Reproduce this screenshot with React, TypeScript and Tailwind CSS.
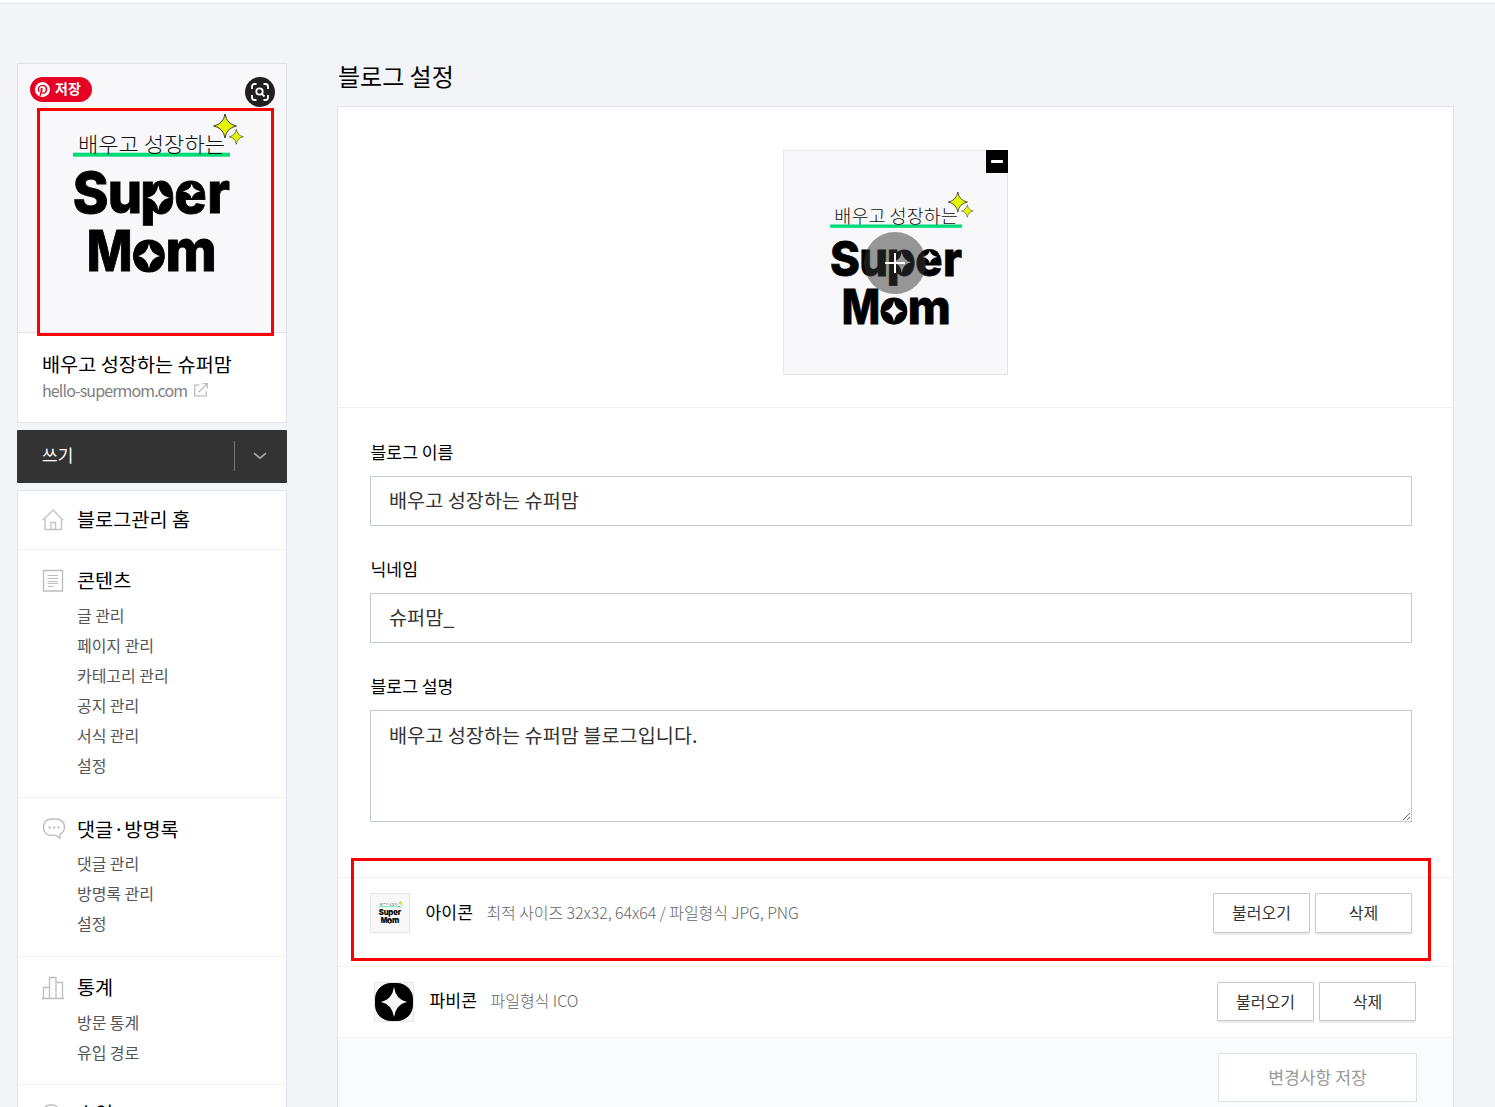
import React from "react";

type LogoProps = { className?: string };

const MENU = [
  {
    title: "콘텐츠",
    icon: <ContentIcon />,
    items: ["글 관리", "페이지 관리", "카테고리 관리", "공지 관리", "서식 관리", "설정"],
    pad: "pt-[15px] pb-[17px]",
    gap: "mt-[5px]",
  },
  {
    title: "댓글·방명록",
    icon: <CommentIcon />,
    items: ["댓글 관리", "방명록 관리", "설정"],
    pad: "pt-4 pb-[18px]",
    gap: "mt-1",
  },
  {
    title: "통계",
    icon: <StatsIcon />,
    items: ["방문 통계", "유입 경로"],
    pad: "pt-[15px] pb-[17px]",
    gap: "mt-[5px]",
  },
];

/* icons ------------------------------------------------------------------ */
function HomeIcon() {
  return (
    <svg width="24" height="24" viewBox="0 0 24 24" fill="none" stroke="#c4c4c4" strokeWidth="1.4">
      <path d="M.8 12.200 11 2l10.200 10.200M3 10.500v11h16.500v-11M9 21.500v-7h4.500v7" />
    </svg>
  );
}

function ContentIcon() {
  return (
    <svg width="24" height="24" viewBox="0 0 24 24" fill="none" stroke="#bdbdbd" strokeWidth="1.4">
      <path d="M1.500 1.500h19v20.500h-19z" />
      <path d="M5.500 6.500h10.500M5.500 9.500h10.500M5.500 12.500h10.500M5.500 14.500h10.500M5.500 17.500h6" strokeWidth="1" />
    </svg>
  );
}

function CommentIcon() {
  return (
    <svg width="24" height="24" viewBox="0 1 24 24" fill="none" stroke="#bdbdbd" strokeWidth="1.4">
      <path d="M9 2h5.500c4.500 0 8 3.300 8 8 0 3.500-1.800 5.700-4.500 7.300v3.700l-4.200-2.600H9C4.500 18.400 1.500 15 1.500 10.200S4.500 2 9 2z" />
      <path d="M6.500 10.500h2.200M11 10.500h2.200M15.500 10.500h2.200" strokeWidth="1.800" />
    </svg>
  );
}

function StatsIcon() {
  return (
    <svg width="24" height="24" viewBox="0 0 24 24" fill="none" stroke="#bdbdbd" strokeWidth="1.3">
      <path d="M0 22.500h22M1.500 22.500V11.500h6M7.500 22.500V1.500h6.500v21M14 6.500h6.500v16" />
    </svg>
  );
}

function RevenueIcon() {
  return (
    <svg width="24" height="24" viewBox="0 0 24 24" fill="none" stroke="#bdbdbd" strokeWidth="1.4">
      <rect x="0.700" y="3" width="17" height="17" rx="7.500" />
    </svg>
  );
}

function ExternalIcon() {
  return (
    <svg width="16" height="16" viewBox="0 0 16 16" fill="none" stroke="#bdbdbd" strokeWidth="1.3">
      <path d="M6.500 3.200H1.700v10.600h11.600V9.500M5.500 10.200l8.500-8.300M9.500 1.700h4.800v4.800" />
    </svg>
  );
}

function Star({ x, y, rx, ry, fill = "#f8f8fb", stroke }: { x: number; y: number; rx: number; ry: number; fill?: string; stroke?: string }) {
  return (
    <path
      transform={`translate(${x} ${y}) scale(${rx} ${ry})`}
      d="M0-1Q.14-.16 1 0 .14.16 0 1-.14.16-1 0-.14-.16 0-1z"
      fill={fill}
      stroke={stroke}
      strokeWidth={stroke ? 0.08 : 0}
    />
  );
}

function Logo({ className }: LogoProps) {
  return (
    <svg viewBox="0 0 268 268" className={className}>
      <rect x="55" y="88.700" width="157" height="4" fill="#00dc78" />
      <text x="60" y="87.500" fontSize="21" fontWeight="300" textLength="147" lengthAdjust="spacingAndGlyphs" fontFamily="'Noto Sans CJK KR', sans-serif" fill="#111">
        배우고 성장하는
      </text>
      <Star x={207} y={62} rx={11.5} ry={12} fill="#e4f500" stroke="#333" />
      <Star x={218.3} y={72.7} rx={7} ry={7.5} fill="#e4f500" stroke="#333" />
      <g fontFamily="Inter, sans-serif" fontWeight="800" fontSize="57" fill="#000" stroke="#000" strokeWidth="0.9">
        <text transform="scale(.95 1)" x="57.7 94.4 128.8 164.6 199.3" y="149.500">
          Super
        </text>
        <text transform="scale(.85 1)" x="80.900" y="207.500">
          M
        </text>
        <text transform="scale(.97 1)" x="117.2 152" y="207.500">
          om
        </text>
      </g>
      {/* filled counters */}
      <ellipse cx="141" cy="134" rx="12.500" ry="14.500" />
      <ellipse cx="173.500" cy="127" rx="12" ry="9" />
      <circle cx="131" cy="192" r="15.800" />
      <Star x={140.3} y={133.7} rx={11} ry={12.5} />
      <Star x={173.7} y={127.3} rx={9} ry={7.5} />
      <Star x={131} y={192} rx={11} ry={12.5} />
    </svg>
  );
}

/* sidebar ---------------------------------------------------------------- */
function ProfileCard() {
  return (
    <div className="h-[360px] border border-[#dfe3ec] bg-white">
      <div className="relative h-[269px] border-b border-[#dfe3ec] bg-[#f8f8fb]">
        <Logo className="h-[268px] w-[268px]" />
        <div className="absolute left-3 top-[13px] flex h-[25px] w-[62px] items-center rounded-full bg-[#e60023] pl-[5px] text-[14px] font-bold text-white">
          <svg width="15" height="15" viewBox="0 0 24 24" className="mr-[5px]">
            <path
              fill="#fff"
              d="M12 0a12 12 0 0 0-4.400 23.200c-.1-.95-.2-2.400.04-3.440l1.400-5.960s-.36-.72-.36-1.780c0-1.670.97-2.920 2.170-2.920 1.030 0 1.520.77 1.520 1.690 0 1.030-.65 2.570-1 4-.28 1.200.6 2.170 1.780 2.170 2.140 0 3.780-2.250 3.780-5.500 0-2.870-2.060-4.880-5.010-4.880-3.410 0-5.410 2.560-5.410 5.200 0 1.030.4 2.140.89 2.740.1.120.11.220.08.340l-.33 1.360c-.05.220-.17.270-.4.160-1.500-.7-2.440-2.890-2.440-4.650 0-3.780 2.750-7.260 7.930-7.260 4.160 0 7.400 2.970 7.400 6.930 0 4.140-2.610 7.460-6.230 7.460-1.220 0-2.360-.63-2.750-1.380l-.75 2.850c-.27 1.040-1 2.350-1.490 3.150A12 12 0 1 0 12 0z"
            />
          </svg>
          <span className="pb-[4px] leading-[22px]">저장</span>
        </div>
        <div className="absolute left-[227px] top-[13px] h-[30px] w-[30px] rounded-full bg-[#211f1f]">
          <svg width="30" height="30" viewBox="0 0 30 30" fill="none" stroke="#fff" strokeWidth="1.800">
            <path d="M7 12V9.500A2.500 2.500 0 0 1 9.500 7H11.500M18.500 7h2A2.500 2.500 0 0 1 23 9.500V12M23 18v2.500a2.500 2.500 0 0 1-2.500 2.500h-2M11.500 23h-2A2.500 2.500 0 0 1 7 20.500V18" />
            <circle cx="14.500" cy="14.500" r="3.200" />
            <path d="m16.800 16.800 2.700 2.700" />
          </svg>
        </div>
        {/* highlight */}
        <div className="absolute left-[19px] top-[44px] h-[228px] w-[237px] border-[3px] border-[#f00]" />
      </div>
      <div className="pl-6 pt-4">
        <p className="text-[19.7px] leading-[30px] text-black">배우고 성장하는 슈퍼맘</p>
        <p className="-mt-px flex items-center gap-[6px] text-[16px] leading-6 tracking-[-0.88px] text-[#808080]">
          hello-supermom.com
          <ExternalIcon />
        </p>
      </div>
    </div>
  );
}

function MenuHeading({ icon, title }: { icon: React.ReactNode; title: string }) {
  return (
    <div className="flex h-[30px] items-center gap-[11px] whitespace-nowrap text-[19.7px] text-black">
      <span className="pt-[2px]">{icon}</span>
      <span>{title}</span>
    </div>
  );
}

function Sidebar() {
  return (
    <aside className="flex w-[270px] shrink-0 flex-col gap-[7px] pt-[60px]">
      <ProfileCard />
      <button className="flex h-[53px] shrink-0 items-center rounded-[1px] bg-[#333] pb-px pl-[25px] text-left text-white">
        <span className="w-[192px] pb-[3px] text-[17px] leading-6">쓰기</span>
        <span className="flex h-[30px] flex-1 items-center justify-center border-l border-[#777] pr-[2px]">
          <svg width="14" height="8" viewBox="0 0 14 8" fill="none" stroke="#aaa" strokeWidth="1.600">
            <path d="m1 1.200 6 5 6-5" />
          </svg>
        </span>
      </button>
      <nav className="shrink-0 border border-[#dfe3ec] bg-white">
        <div className="h-[59px] border-b border-[#f0f2f4] pl-6 pt-[13px]">
          <MenuHeading icon={<HomeIcon />} title="블로그관리 홈" />
        </div>
        {MENU.map((m) => (
          <div key={m.title} className={`border-b border-[#f0f2f4] pl-6 ${m.pad}`}>
            <MenuHeading icon={m.icon} title={m.title} />
            <ul className={`pl-[35px] ${m.gap}`}>
              {m.items.map((item) => (
                <li key={item} className="h-[30px] text-[16px] leading-[30px] tracking-[-0.05px] text-[#555]">
                  {item}
                </li>
              ))}
            </ul>
          </div>
        ))}
        <div className="h-[60px] pl-6 pt-[13px]">
          <MenuHeading icon={<RevenueIcon />} title="수익" />
        </div>
      </nav>
    </aside>
  );
}

/* main ------------------------------------------------------------------- */
function FileButtons({ height }: { height: string }) {
  return (
    <div className="ml-auto flex gap-[5px] text-[16px] text-[#333]">
      {["불러오기", "삭제"].map((label) => (
        <button
          key={label}
          className={`w-[97px] rounded-[1px] border border-[#c4cad3] bg-white pb-[2px] shadow-[0_2px_1px_rgba(0,0,0,0.08)] ${height}`}
        >
          {label}
        </button>
      ))}
    </div>
  );
}

function Label({ children }: { children: React.ReactNode }) {
  return <label className="block h-[24px] pl-[0.5px] text-[17.2px] leading-6 text-black">{children}</label>;
}

function Field({ children }: { children: React.ReactNode }) {
  return (
    <div className="mb-[31px] mt-3 flex h-[50px] items-center border border-[#c4cad3] pb-[2px] pl-[18px] text-[19.7px] text-[#333]">
      {children}
    </div>
  );
}

function SettingsPanel() {
  return (
    <div className="relative h-[1010px] border border-[#e1e3e8] bg-white">
      <div className="flex h-[301px] justify-center border-b border-[#f0f2f4] pt-[43px]">
        <div className="relative h-[225px] w-[225px] border border-[#e6e6e9] bg-[#f8f8fb]">
          <Logo className="-ml-[0.5px] -mt-[0.7px] h-[225px] w-[225px]" />
          <div className="absolute left-20 top-[81px] flex h-[62px] w-[62px] items-center justify-center rounded-full bg-[#333]/50">
            <svg width="20" height="20" viewBox="0 0 20 20" stroke="#fff" strokeWidth="2">
              <path d="M0 10h20M10 0v20" />
            </svg>
          </div>
          <button className="absolute -right-px -top-px flex h-[23px] w-[22px] items-center justify-center bg-black">
            <span className="h-[3px] w-3 rounded-[1px] bg-white" />
          </button>
        </div>
      </div>

      <div className="h-[470px] border-b border-[#f0f2f4] pl-8 pr-[41px] pt-8">
        <Label>블로그 이름</Label>
        <Field>배우고 성장하는 슈퍼맘</Field>
        <Label>닉네임</Label>
        <Field>슈퍼맘_</Field>
        <Label>블로그 설명</Label>
        <textarea
          readOnly
          value="배우고 성장하는 슈퍼맘 블로그입니다."
          className="mt-3 block h-[112px] w-full resize-y border border-[#c4cad3] px-[18px] pt-[9px] text-[19.7px] leading-[30px] text-[#333] outline-none"
        />
      </div>

      <div className="flex h-[89px] items-start border-b border-[#f0f2f4] pl-8 pr-[41px] pt-[15px]">
        <div className="h-10 w-10 border border-[#e6e6e9] bg-[#f8f8fb]">
          <Logo className="h-[38px] w-[38px]" />
        </div>
        <span className="ml-[15.5px] text-[17.2px] leading-[38px] text-black">아이콘</span>
        <span className="ml-[13.5px] text-[16px] font-light leading-[38px] tracking-[-0.09px] text-[#666]">
          최적 사이즈 32x32, 64x64 / 파일형식 JPG, PNG
        </span>
        <FileButtons height="h-10" />
      </div>

      <div className="flex h-[71px] items-start border-b border-[#f0f2f4] pl-9 pr-[37px] pt-[15px]">
        <div className="h-10 w-10 border border-[#e6e6e9] bg-[#f8f8fb]">
          <svg width="38" height="38" viewBox="0 0 38 38">
            <rect width="38" height="38" rx="16" />
            <Star x={19} y={19} rx={13} ry={15} />
          </svg>
        </div>
        <span className="ml-[15.5px] text-[17.2px] leading-9 text-black">파비콘</span>
        <span className="ml-[13.5px] text-[16px] font-light leading-9 text-[#666]">파일형식 ICO</span>
        <FileButtons height="h-[39px]" />
      </div>

      <div className="flex h-[77px] justify-end bg-[#fafbfd] pr-9 pt-[15px]">
        <button className="h-[49px] w-[199px] border border-[#dfe3ea] bg-white pb-[2px] text-[17.2px] text-[#999]">변경사항 저장</button>
      </div>

      {/* highlight */}
      <div className="absolute left-[13px] top-[751px] h-[103px] w-[1080px] border-[3px] border-[#f00]" />
    </div>
  );
}

export default function App() {
  return (
    <div className="h-[1107px] w-[1495px] overflow-hidden bg-[#f3f4f7] font-['Noto_Sans_CJK_KR',sans-serif]">
      <div className="h-1 border-b border-[#e1e4e8] bg-white" />
      <div className="-mt-px flex pl-[17px]">
        <Sidebar />
        <main className="ml-[50px] w-[1117px] pt-[53px]">
          <h1 className="mb-[10px] h-10 pl-px text-[24px] leading-10 text-black">블로그 설정</h1>
          <SettingsPanel />
        </main>
      </div>
    </div>
  );
}
